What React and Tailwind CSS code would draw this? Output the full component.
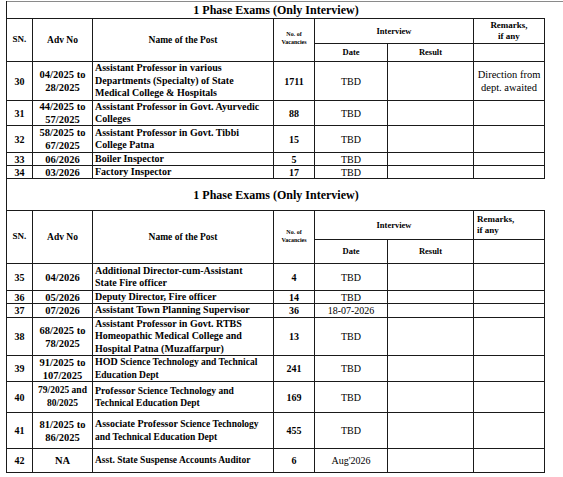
import React from "react";

const B = "border-r border-b border-[#1a1a1a] flex items-center";
const C = B + " justify-center text-center";
const N = B + " justify-start text-left pl-[2px]";

function Header({ vacCls, remarksLeft }) {
  return (
    <>
      <div className={C + " row-span-2 font-bold text-[9px]"}>SN.</div>
      <div className={C + " row-span-2 font-bold text-[9.5px]"}>Adv No</div>
      <div className={C + " row-span-2 font-bold text-[9.5px]"}>Name of the Post</div>
      <div className={C + " row-span-2 font-bold text-[6px] leading-[8px] " + vacCls}>
        <span>No. of<br />Vacancies</span>
      </div>
      <div className={C + " col-span-2 font-bold text-[8.5px]"}>Interview</div>
      <div className={(remarksLeft ? N + " pl-[3px]" : C) + " font-bold text-[9px] leading-[11px]"}>
        <span>Remarks,<br />if any</span>
      </div>
      <div className={C + " font-bold text-[8.5px]"}>Date</div>
      <div className={C + " font-bold text-[8.5px]"}>Result</div>
      <div className={B}></div>
    </>
  );
}

function Row({ sn, adv, name, vac, date, remark, advCls = "text-[10.5px]" }) {
  return (
    <>
      <div className={C + " font-bold text-[10px]"}>{sn}</div>
      <div className={C + " font-bold leading-[13px] whitespace-nowrap " + advCls}>
        <span>
          {adv.map((l, i) => (
            <React.Fragment key={i}>
              {i > 0 && <br />}
              {l}
            </React.Fragment>
          ))}
        </span>
      </div>
      <div className={N + " font-bold text-[10px] leading-[12.5px] whitespace-nowrap"}>
        <span>{name}</span>
      </div>
      <div className={C + " font-bold text-[10px]"}>{vac}</div>
      <div className={C + " text-[10px]"}>{date}</div>
      <div className={B}></div>
      <div className={C + " text-[10.5px] leading-[13px]"}>{remark}</div>
    </>
  );
}

const lines = (...ls) =>
  ls.map((l, i) => (
    <React.Fragment key={i}>
      {i > 0 && <br />}
      {l}
    </React.Fragment>
  ));

const small = (t) => <span className="text-[9.5px]">{t}</span>;

export default function App() {
  const cols = "grid grid-cols-[26px_60px_181px_41px_73px_86px_71px] w-[538px] border-t border-[#1a1a1a]";
  return (
    <div className="w-[563px] h-[477px] bg-white text-black font-['Liberation_Serif',serif] overflow-hidden">
      <div className="pt-[1px]">
        <div className="ml-[6px] border-l border-[#1a1a1a] h-[472px]">
          <div className="w-[557px] border-t border-[#8a8a8a]"></div>
          <div className="w-[538px] h-[16px] flex items-center justify-center font-bold text-[12px]">
            1 Phase Exams (Only Interview)
          </div>
          <div className={cols + " grid-rows-[25px_18px_39px_25px_27px_13px_13px]"}>
            <Header vacCls="pb-[5px]" />
            <Row
              sn="30"
              adv={["04/2025 to", "28/2025"]}
              name={lines(
                "Assistant Professor in various",
                "Departments (Specialty) of State",
                "Medical College & Hospitals"
              )}
              vac="1711"
              date="TBD"
              remark={lines("Direction from", "dept. awaited")}
            />
            <Row
              sn="31"
              adv={["44/2025 to", "57/2025"]}
              name={lines("Assistant Professor in Govt. Ayurvedic", "Colleges")}
              vac="88"
              date="TBD"
            />
            <Row
              sn="32"
              adv={["58/2025 to", "67/2025"]}
              name={lines("Assistant Professor in Govt. Tibbi", "College Patna")}
              vac="15"
              date="TBD"
            />
            <Row sn="33" adv={["06/2026"]} name="Boiler Inspector" vac="5" date="TBD" />
            <Row sn="34" adv={["03/2026"]} name="Factory Inspector" vac="17" date="TBD" />
          </div>
          <div className="w-[538px] h-[31px] flex items-center justify-center font-bold text-[12px]">
            1 Phase Exams (Only Interview)
          </div>
          <div className={cols + " grid-rows-[29px_24px_27px_13px_14px_38px_26px_31px_36px_24px]"}>
            <Header vacCls="pb-[2px]" remarksLeft />
            <Row
              sn="35"
              adv={["04/2026"]}
              name={lines("Additional Director-cum-Assistant", "State Fire officer")}
              vac="4"
              date="TBD"
            />
            <Row sn="36" adv={["05/2026"]} name="Deputy Director, Fire officer" vac="14" date="TBD" />
            <Row
              sn="37"
              adv={["07/2026"]}
              name="Assistant Town Planning Supervisor"
              vac="36"
              date="18-07-2026"
            />
            <Row
              sn="38"
              adv={["68/2025 to", "78/2025"]}
              name={lines(
                "Assistant Professor in Govt. RTBS",
                "Homeopathic Medical College and",
                "Hospital Patna (Muzaffarpur)"
              )}
              vac="13"
              date="TBD"
            />
            <Row
              sn="39"
              adv={["91/2025 to", "107/2025"]}
              name={
                <>
                  HOD {small("Science Technology and Technical")}
                  <br />
                  {small("Education Dept")}
                </>
              }
              vac="241"
              date="TBD"
            />
            <Row
              sn="40"
              adv={["79/2025 and", "80/2025"]}
              advCls="text-[9.5px]"
              name={
                <>
                  Professor {small("Science Technology and")}
                  <br />
                  {small("Technical Education Dept")}
                </>
              }
              vac="169"
              date="TBD"
            />
            <Row
              sn="41"
              adv={["81/2025 to", "86/2025"]}
              name={
                <>
                  Associate Professor {small("Science Technology")}
                  <br />
                  {small("and Technical Education Dept")}
                </>
              }
              vac="455"
              date="TBD"
            />
            <Row
              sn="42"
              adv={["NA"]}
              name={small("Asst. State Suspense Accounts Auditor")}
              vac="6"
              date="Aug'2026"
            />
          </div>
        </div>
      </div>
    </div>
  );
}
